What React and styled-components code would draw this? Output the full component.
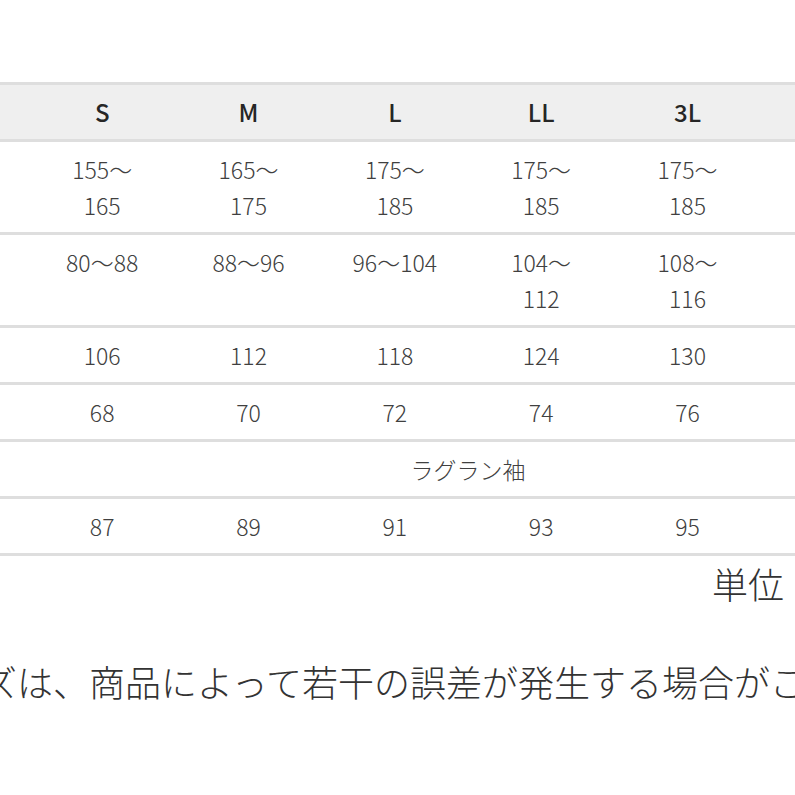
import React from "react";
import styled, { createGlobalStyle } from "styled-components";

const Global = createGlobalStyle`
  html, body { margin: 0; padding: 0; background: #fff; overflow: hidden; }
  * { box-sizing: border-box; }
`;

const Page = styled.div`
  width: 795px;
  height: 795px;
  overflow: hidden;
  background: #fff;
  padding-top: 82px;
  font-family: "Noto Sans CJK JP", "Noto Sans", sans-serif;
  color: #3c3c3c;
`;

const Sheet = styled.div`
  margin-left: -117px;
  width: 1024px;
`;

const Table = styled.table`
  width: 1024px;
  table-layout: fixed;
  border-collapse: separate;
  border-spacing: 0;
  border-top: 3px solid #dedede;
`;

const Col = styled.col`
  width: ${(p) => p.$w}px;
`;

const HeadCell = styled.th`
  padding: 9px 0;
  height: 57px;
  line-height: 36px;
  font-size: 24px;
  font-weight: 500;
  color: #262626;
  background: #efefef;
  border-bottom: 3px solid #dedede;
  text-align: ${(p) => (p.$label ? "left" : "center")};
  padding-left: ${(p) => (p.$label ? "12px" : "0")};
  white-space: nowrap;
`;

const Cell = styled.td`
  padding: 9px 0;
  line-height: 36px;
  font-size: 23px;
  font-weight: 300;
  color: #404040;
  border-bottom: 3px solid #dedede;
  text-align: ${(p) => (p.$label ? "left" : "center")};
  padding-left: ${(p) => (p.$label ? "12px" : "0")};
  vertical-align: top;
  white-space: pre-line;
`;

const Unit = styled.p`
  margin: 9px 0 0;
  padding-left: 829px;
  font-size: 36px;
  line-height: 36px;
  font-weight: 300;
  color: #333;
  white-space: nowrap;
`;

const Disclaimer = styled.p`
  margin: 62px 0 0 -126px;
  font-size: 36px;
  line-height: 36px;
  font-weight: 300;
  color: #333;
  white-space: nowrap;
`;

const sizes = ["S", "M", "L", "LL", "3L", "4L"];

const rows = [
  { label: "身長", values: ["155〜\n165", "165〜\n175", "175〜\n185", "175〜\n185", "175〜\n185", "185〜\n195"] },
  { label: "胸囲", values: ["80〜88", "88〜96", "96〜104", "104〜\n112", "108〜\n116", "116〜\n124"] },
  { label: "バスト", values: ["106", "112", "118", "124", "130", "136"] },
  { label: "着丈", values: ["68", "70", "72", "74", "76", "78"] },
  { label: "袖", span: "ラグラン袖" },
  { label: "裄丈", values: ["87", "89", "91", "93", "95", "97"] },
];

export default function App() {
  return (
    <>
      <Global />
      <Page>
        <Sheet>
          <Table>
            <colgroup>
              <Col $w={146} />
              {sizes.map((s) => (
                <Col key={s} $w={146.3} />
              ))}
            </colgroup>
            <thead>
              <tr>
                <HeadCell $label>サイズ</HeadCell>
                {sizes.map((s) => (
                  <HeadCell key={s}>{s}</HeadCell>
                ))}
              </tr>
            </thead>
            <tbody>
              {rows.map((r) => (
                <tr key={r.label}>
                  <Cell $label>{r.label}</Cell>
                  {r.span ? (
                    <Cell colSpan={6}>{r.span}</Cell>
                  ) : (
                    r.values.map((v, i) => <Cell key={i}>{v}</Cell>)
                  )}
                </tr>
              ))}
            </tbody>
          </Table>
          <Unit>単位：cm</Unit>
        </Sheet>
        <Disclaimer>※サイズは、商品によって若干の誤差が発生する場合がございます。</Disclaimer>
      </Page>
    </>
  );
}
